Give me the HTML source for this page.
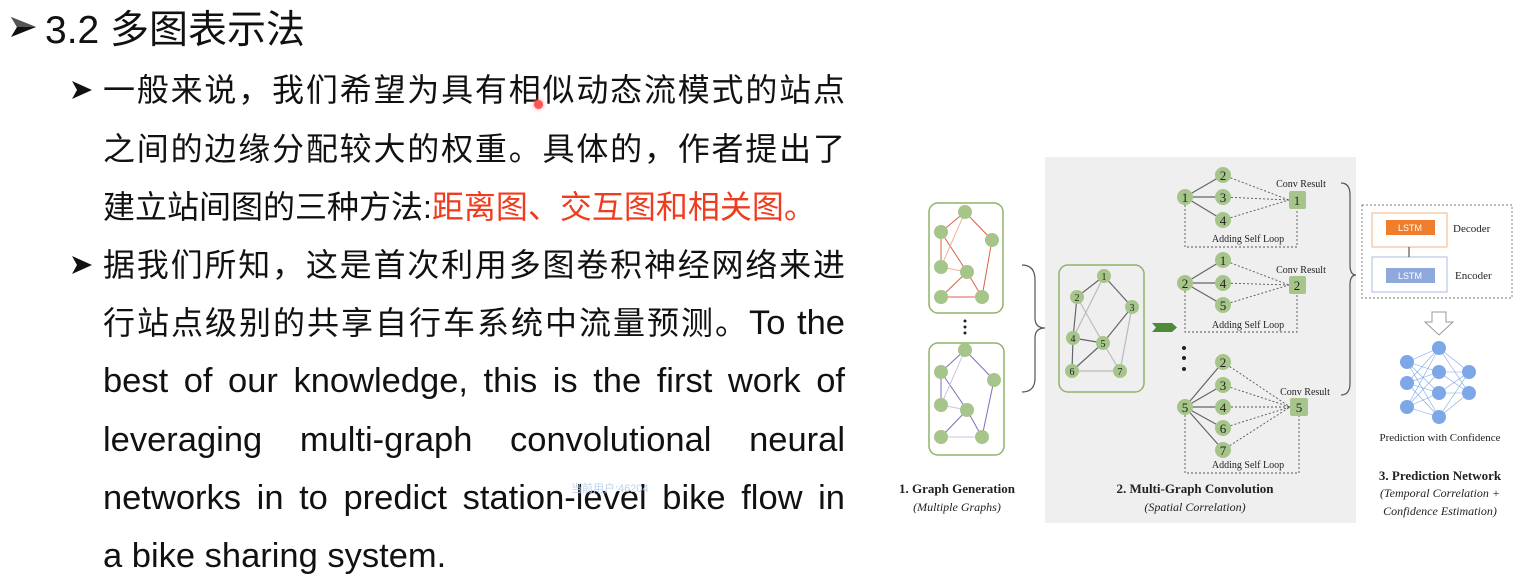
<!DOCTYPE html>
<html><head><meta charset="utf-8"><style>
body{margin:0;width:1517px;height:588px;background:#fff;overflow:hidden;position:relative;font-family:"Liberation Sans","Noto Sans CJK SC",sans-serif;color:#111}
.t{position:absolute;left:45px;top:7px;font-size:39px;line-height:48px;white-space:nowrap}
.l{position:absolute;left:103px;width:742px;font-size:32px;line-height:40px;text-align:justify;text-align-last:justify;white-space:nowrap}
.e{font-size:34.5px}
.nj{text-align-last:left}
.r{color:#f03c1e}
svg{position:absolute;left:0;top:0}
</style></head><body>
<div class="t">3.2 多图表示法</div>
<div class="l" style="top:70px">一般来说，我们希望为具有相似动态流模式的站点</div>
<div class="l" style="top:129px">之间的边缘分配较大的权重。具体的，作者提出了</div>
<div class="l nj" style="top:187px">建立站间图的三种方法:<span class="r">距离图、交互图和相关图。</span></div>
<div class="l" style="top:245px">据我们所知，这是首次利用多图卷积神经网络来进</div>
<div class="l" style="top:303px">行站点级别的共享自行车系统中流量预测。<span class="e">To the</span></div>
<div class="l e" style="top:361px">best of our knowledge, this is the first work of</div>
<div class="l e" style="top:420px">leveraging multi-graph convolutional neural</div>
<div class="l e" style="top:478px">networks in to predict station-level bike flow in</div>
<div class="l e nj" style="top:536px">a bike sharing system.</div>
<div style="position:absolute;left:571px;top:480px;font-size:11px;color:#bcd3ee">当前用户:46204</div>
<div style="position:absolute;left:534px;top:100px;width:9px;height:9px;border-radius:50%;background:#f55;box-shadow:0 0 4px #f88"></div>

<svg width="1517" height="588" font-family="Liberation Serif,serif">
<g fill="#111">
<path d="M11 17L36 27L11 37L17 27Z"/><path d="M11 17L36 27L17 27Z" fill="#555"/>
<path d="M72 81L92 90L72 99L77 90Z"/>
<path d="M72 256L92 265L72 274L77 265Z"/>
</g>
<rect x="1045" y="157" width="311" height="366" fill="#efefef"/>
<g fill="none" stroke="#8fb46a" stroke-width="1.5">
<rect x="929" y="203" width="74" height="110" rx="9"/>
<rect x="929" y="343" width="75" height="112" rx="9"/>
<rect x="1059" y="265" width="85" height="127" rx="9"/>
</g>
<g stroke="#d9604a" stroke-width="1" fill="none">
<path d="M965 212L941 232M965 212L992 240M941 232L967 272M992 240L982 297M967 272L941 297M967 272L982 297M941 232L941 267M941 297L982 297" />
<path d="M965 212L941 267M941 267L967 272" stroke="#f0b0a0"/>
</g>
<g stroke="#7a72b8" stroke-width="1" fill="none">
<path d="M965 350L941 372M965 350L994 380M941 372L967 410M994 380L982 437M967 410L941 437M967 410L982 437M941 372L941 405" />
<path d="M965 350L941 405M941 405L967 410M941 437L982 437" stroke="#c8c4e0"/>
</g>
<g fill="#a6c58a">
<circle cx="965" cy="212" r="7"/><circle cx="941" cy="232" r="7"/><circle cx="992" cy="240" r="7"/><circle cx="941" cy="267" r="7"/><circle cx="967" cy="272" r="7"/><circle cx="941" cy="297" r="7"/><circle cx="982" cy="297" r="7"/>
<circle cx="965" cy="350" r="7"/><circle cx="941" cy="372" r="7"/><circle cx="994" cy="380" r="7"/><circle cx="941" cy="405" r="7"/><circle cx="967" cy="410" r="7"/><circle cx="941" cy="437" r="7"/><circle cx="982" cy="437" r="7"/>
</g>
<g fill="#222"><circle cx="965" cy="321" r="1.5"/><circle cx="965" cy="327" r="1.5"/><circle cx="965" cy="333" r="1.5"/>
<circle cx="1184" cy="348" r="2"/><circle cx="1184" cy="358" r="2"/><circle cx="1184" cy="369" r="2"/></g>
<path d="M1022 265Q1035 265 1035 280V318Q1035 328 1045 328Q1035 328 1035 338V378Q1035 392 1022 392" fill="none" stroke="#555" stroke-width="1.2"/>
<path d="M1341 183Q1350 183 1350 195V265Q1350 275 1356 275Q1350 275 1350 285V383Q1350 395 1341 395" fill="none" stroke="#555" stroke-width="1.2"/>
<g stroke="#666" stroke-width="1.2"><path d="M1104 276L1077 297M1104 276L1132 307M1132 307L1103 343M1077 297L1073 338M1073 338L1103 343M1103 343L1072 371M1073 338L1072 371" fill="none"/>
<path d="M1104 276L1073 338M1077 297L1103 343M1132 307L1120 371M1103 343L1120 371M1072 371L1120 371" stroke="#bbb" fill="none"/></g>
<g fill="#a6c58a"><circle cx="1104" cy="276" r="7"/><circle cx="1077" cy="297" r="7"/><circle cx="1132" cy="307" r="7"/><circle cx="1073" cy="338" r="7"/><circle cx="1103" cy="343" r="7"/><circle cx="1072" cy="371" r="7"/><circle cx="1120" cy="371" r="7"/></g>
<g font-size="10" text-anchor="middle" fill="#222"><text x="1104" y="280">1</text><text x="1077" y="301">2</text><text x="1132" y="311">3</text><text x="1073" y="342">4</text><text x="1103" y="347">5</text><text x="1072" y="375">6</text><text x="1120" y="375">7</text></g>
<path d="M1152 323H1172L1177 327.5L1172 332H1152L1156 327.5Z" fill="#4f8a3a"/>
<g stroke="#666" stroke-width="1.2" fill="none">
<path d="M1185 197L1223 175M1185 197L1223 197M1185 197L1223 220"/>
<path d="M1185 283L1223 260M1185 283L1223 283M1185 283L1223 305"/>
<path d="M1185 407L1223 362M1185 407L1223 385M1185 407L1223 407M1185 407L1223 428M1185 407L1223 450"/>
</g>
<g stroke="#555" stroke-width="0.9" fill="none" stroke-dasharray="2,2">
<path d="M1223 175L1289 200M1223 197L1289 200M1223 220L1289 200M1185 197V247H1297V209"/>
<path d="M1223 260L1289 285M1223 283L1289 285M1223 305L1289 285M1185 283V332H1297V294"/>
<path d="M1223 362L1290 407M1223 385L1290 407M1223 407L1290 407M1223 428L1290 407M1223 450L1290 407M1185 407V473H1299V416"/>
</g>
<g fill="#a6c58a">
<circle cx="1185" cy="197" r="8"/><circle cx="1223" cy="175" r="8"/><circle cx="1223" cy="197" r="8"/><circle cx="1223" cy="220" r="8"/>
<circle cx="1185" cy="283" r="8"/><circle cx="1223" cy="260" r="8"/><circle cx="1223" cy="283" r="8"/><circle cx="1223" cy="305" r="8"/>
<circle cx="1185" cy="407" r="8"/><circle cx="1223" cy="362" r="8"/><circle cx="1223" cy="385" r="8"/><circle cx="1223" cy="407" r="8"/><circle cx="1223" cy="428" r="8"/><circle cx="1223" cy="450" r="8"/>
<rect x="1289" y="191" width="17" height="18" rx="2"/><rect x="1289" y="276" width="17" height="18" rx="2"/><rect x="1290" y="398" width="18" height="18" rx="2"/>
</g>
<g font-size="13" text-anchor="middle" fill="#222">
<text x="1185" y="202">1</text><text x="1223" y="180">2</text><text x="1223" y="202">3</text><text x="1223" y="225">4</text><text x="1297" y="205">1</text>
<text x="1185" y="288">2</text><text x="1223" y="265">1</text><text x="1223" y="288">4</text><text x="1223" y="310">5</text><text x="1297" y="290">2</text>
<text x="1185" y="412">5</text><text x="1223" y="367">2</text><text x="1223" y="390">3</text><text x="1223" y="412">4</text><text x="1223" y="433">6</text><text x="1223" y="455">7</text><text x="1299" y="412">5</text>
</g>
<g font-size="10" text-anchor="middle" fill="#222">
<text x="1301" y="187">Conv Result</text><text x="1248" y="242">Adding Self Loop</text>
<text x="1301" y="273">Conv Result</text><text x="1248" y="328">Adding Self Loop</text>
<text x="1305" y="395">Conv Result</text><text x="1248" y="468">Adding Self Loop</text>
</g>
<rect x="1362" y="205" width="150" height="93" fill="none" stroke="#777" stroke-width="0.9" stroke-dasharray="2,2"/>
<rect x="1372" y="213" width="75" height="34" fill="#fff" stroke="#f2b68a"/>
<rect x="1386" y="220" width="49" height="15" fill="#ef7d2c"/>
<rect x="1372" y="257" width="75" height="35" fill="#fff" stroke="#a9bde0"/>
<rect x="1386" y="268" width="49" height="15" fill="#8fa9dc"/>
<line x1="1409" y1="257" x2="1409" y2="247" stroke="#333"/>
<g font-size="9" font-family="Liberation Sans,sans-serif" fill="#fff" text-anchor="middle"><text x="1410" y="231">LSTM</text><text x="1410" y="279">LSTM</text></g>
<g font-size="11" fill="#222"><text x="1453" y="232">Decoder</text><text x="1455" y="279">Encoder</text></g>
<path d="M1432 312H1446V322H1453L1439 335L1425 322H1432Z" fill="#fff" stroke="#999"/>
<g stroke="#7ea7e8" stroke-width="0.6">
<path d="M1407 362L1439 348M1407 362L1439 372M1407 362L1439 393M1407 362L1439 417M1407 383L1439 348M1407 383L1439 372M1407 383L1439 393M1407 383L1439 417M1407 407L1439 348M1407 407L1439 372M1407 407L1439 393M1407 407L1439 417M1439 348L1469 372M1439 348L1469 393M1439 372L1469 372M1439 372L1469 393M1439 393L1469 372M1439 393L1469 393M1439 417L1469 372M1439 417L1469 393"/>
</g>
<g fill="#7ea7e8"><circle cx="1407" cy="362" r="7"/><circle cx="1407" cy="383" r="7"/><circle cx="1407" cy="407" r="7"/><circle cx="1439" cy="348" r="7"/><circle cx="1439" cy="372" r="7"/><circle cx="1439" cy="393" r="7"/><circle cx="1439" cy="417" r="7"/><circle cx="1469" cy="372" r="7"/><circle cx="1469" cy="393" r="7"/></g>
<g text-anchor="middle" fill="#222">
<text x="1440" y="441" font-size="11">Prediction with Confidence</text>
<text x="1440" y="480" font-size="13" font-weight="bold">3. Prediction Network</text>
<text x="1440" y="497" font-size="12" font-style="italic">(Temporal Correlation +</text>
<text x="1440" y="515" font-size="12" font-style="italic">Confidence Estimation)</text>
<text x="957" y="493" font-size="13" font-weight="bold">1.   Graph Generation</text>
<text x="957" y="511" font-size="12" font-style="italic">(Multiple Graphs)</text>
<text x="1195" y="493" font-size="13" font-weight="bold">2. Multi-Graph Convolution</text>
<text x="1195" y="511" font-size="12" font-style="italic">(Spatial Correlation)</text>
</g>
</svg>
</body></html>
